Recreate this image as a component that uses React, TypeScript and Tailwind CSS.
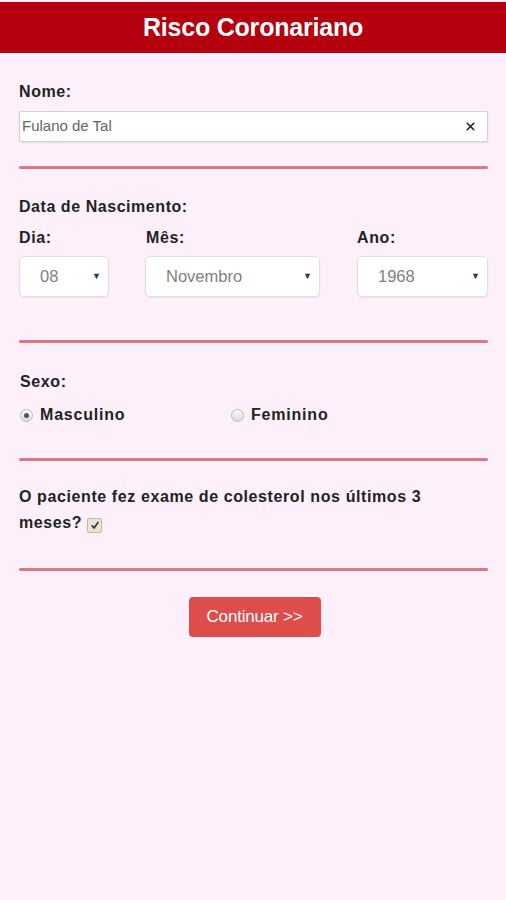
import { X } from 'lucide-react';

function Divider() {
    return <div className="h-[3px] bg-[#dc7683] rounded-full" />;
}

function SelectBox({ value, className }: { value: string; className: string }) {
    return (
        <div
            className={`h-[41px] bg-white border border-[#e2dde2] rounded-[5px] shadow-[0_1px_2px_rgba(0,0,0,0.06)] flex items-center justify-between pl-5 pr-[7px] text-[16.5px] text-[#808080] ${className}`}
        >
            <span>{value}</span>
            <span className="text-[9px] text-[#333]">▼</span>
        </div>
    );
}

function Radio({ checked }: { checked: boolean }) {
    return (
        <span className="w-[13px] h-[13px] rounded-full border border-[#bbb] bg-gradient-to-b from-[#fafafa] to-[#ddd] flex items-center justify-center">
            {checked && <span className="w-[5px] h-[5px] rounded-full bg-[#555]" />}
        </span>
    );
}

export default function App() {
    return (
        <div className="min-h-[900px] bg-[#fdf0fb] pt-[2px] font-['Liberation_Sans',Arial,sans-serif] text-[#222]">
            <header className="h-[51px] bg-[#b5000d] flex items-center justify-center">
                <h1 className="text-[25px] font-bold text-white tracking-[-0.2px]">Risco Coronariano</h1>
            </header>

            <main className="px-[19px] pr-[18px]">
                <section className="pt-[30px] pb-[24px]">
                    <label className="block text-[16px] font-bold leading-[18px] tracking-[0.6px] mb-[10px]">Nome:</label>
                    <div className="h-[31px] bg-white border border-[#d4d0d4] rounded-[2px] shadow-[0_1px_2px_rgba(0,0,0,0.1)] flex items-center justify-between pl-[2px] pr-[10px]">
                        <span className="text-[15px] text-[#666]">Fulano de Tal</span>
                        <X className="w-[13px] h-[13px] text-[#222]" strokeWidth={3} />
                    </div>
                </section>
                <Divider />

                <section className="pt-[29px] pb-[43px]">
                    <div className="text-[16px] font-bold leading-[18px] tracking-[0.55px] mb-[13px]">Data de Nascimento:</div>
                    <div className="flex">
                        <div className="w-[126px]">
                            <div className="text-[16px] font-bold leading-[18px] tracking-[0.6px] mb-[9px]">Dia:</div>
                            <SelectBox value="08" className="w-[90px]" />
                        </div>
                        <div className="w-[212px]">
                            <div className="text-[16px] font-bold leading-[18px] tracking-[0.6px] mb-[9px] pl-[1px]">Mês:</div>
                            <SelectBox value="Novembro" className="w-[175px]" />
                        </div>
                        <div className="flex-1">
                            <div className="text-[16px] font-bold leading-[18px] tracking-[0.6px] mb-[9px]">Ano:</div>
                            <SelectBox value="1968" className="w-full" />
                        </div>
                    </div>
                </section>
                <Divider />

                <section className="pt-[30px] pb-[31px] pl-[1px]">
                    <div className="text-[16px] font-bold leading-[18px] tracking-[0.6px] mb-[12px]">Sexo:</div>
                    <div className="flex items-center text-[16px] font-bold tracking-[0.8px]">
                        <div className="w-[211px] flex items-center gap-[7px]">
                            <Radio checked />
                            <span>Masculino</span>
                        </div>
                        <div className="flex items-center gap-[7px]">
                            <Radio checked={false} />
                            <span>Feminino</span>
                        </div>
                    </div>
                </section>
                <Divider />

                <section className="pt-[23px] pb-[32px]">
                    <p className="text-[16px] font-bold leading-[26px] tracking-[0.6px] pr-[50px]">
                        O paciente fez exame de colesterol nos últimos 3 meses?{' '}
                        <span className="inline-flex align-[-2px] w-[15px] h-[15px] rounded-[2px] border border-[#e8b45f] bg-[#e4e4e4] items-center justify-center">
                            <svg viewBox="0 0 12 12" className="w-[10px] h-[10px]">
                                <path d="M2 6.5 L5 9.5 L10 2.5" fill="none" stroke="#333" strokeWidth="2" />
                            </svg>
                        </span>
                    </p>
                </section>
                <Divider />

                <div className="flex justify-center pt-[26px] pl-[2px]">
                    <button className="w-[132px] h-[40px] bg-[#dc4d4b] rounded-[4px] text-white text-[17px] tracking-[-0.2px]">
                        Continuar &gt;&gt;
                    </button>
                </div>
            </main>
        </div>
    );
}
